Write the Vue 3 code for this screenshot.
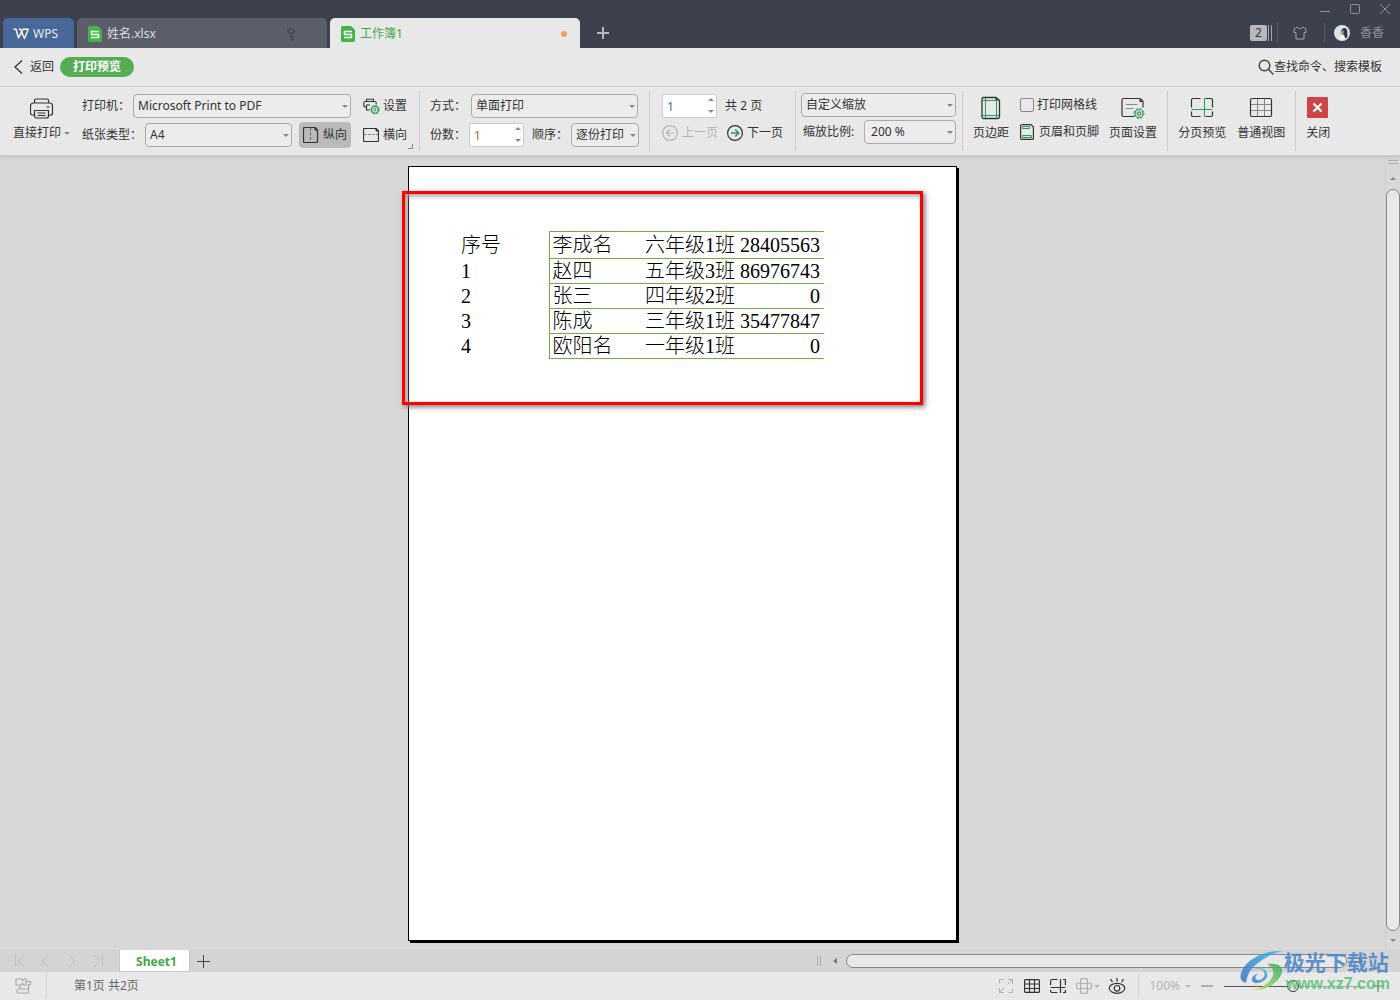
<script setup>
import { ref } from 'vue'

const rows = [
  ['序号', '李成名', '六年级1班', '28405563'],
  ['1', '赵四', '五年级3班', '86976743'],
  ['2', '张三', '四年级2班', '0'],
  ['3', '陈成', '三年级1班', '35477847'],
  ['4', '欧阳名', '一年级1班', '0'],
]
const copies = ref('1')
const page = ref('1')
const gridLines = ref(false)
</script>

<template>
  <div class="app">
    <header class="titlebar">
      <nav class="tabs">
        <button class="tab tab-home">
          <svg width="16" height="12" viewBox="0 0 16 12" fill="none" stroke="#fff" stroke-width="1.400"><path d="M.5 1.200H3L5.500 10 10 1.200h5.200L11.500 10.500 7.500 1.200H5.800M5.500 10L9 4" stroke-linejoin="round" /></svg>
          <span>WPS</span>
        </button>
        <button class="tab tab-file">
          <svg width="14" height="16" viewBox="0 0 14 16"><path d="M1.500 0H10l4 4v10.500a1.500 1.500 0 0 1-1.500 1.500h-11A1.500 1.500 0 0 1 0 14.500v-13A1.500 1.500 0 0 1 1.500 0z" fill="#41b549" /><path d="M11 5.500H3.500v3h7v3H3" fill="none" stroke="#fff" stroke-width="1.500" /></svg>
          <span>姓名.xlsx</span>
          <svg class="tab-end pin" width="9" height="13" viewBox="0 0 9 13" fill="none" stroke="#3d414d" stroke-width="1.200"><rect x="1" y="1" width="6" height="4" rx="1.500" /><path d="M4 5v7.500M4 8.500h3M4 11.500h3" /></svg>
        </button>
        <button class="tab tab-file tab-active">
          <svg width="14" height="16" viewBox="0 0 14 16"><path d="M1.500 0H10l4 4v10.500a1.500 1.500 0 0 1-1.500 1.500h-11A1.500 1.500 0 0 1 0 14.500v-13A1.500 1.500 0 0 1 1.500 0z" fill="#41b549" /><path d="M11 5.500H3.500v3h7v3H3" fill="none" stroke="#fff" stroke-width="1.500" /></svg>
          <span>工作簿1</span>
          <i class="tab-end dot"></i>
        </button>
        <button class="tab-add" aria-label="新建">
          <svg width="12" height="12" viewBox="0 0 12 12" stroke="#b7b9bf" stroke-width="2"><path d="M6 0v12M0 6h12" /></svg>
        </button>
      </nav>
      <div class="title-right">
        <div class="window-buttons">
          <button aria-label="最小化"><svg width="10" height="10" viewBox="0 0 10 10" stroke="#8f929b"><path d="M0 7.500h10" /></svg></button>
          <button aria-label="最大化"><svg width="10" height="10" viewBox="0 0 10 10" fill="none" stroke="#8f929b"><rect x=".5" y=".5" width="9" height="9" rx="1" /></svg></button>
          <button aria-label="关闭窗口"><svg width="10" height="10" viewBox="0 0 10 10" stroke="#8f929b"><path d="M0 0l10 10M10 0L0 10" /></svg></button>
        </div>
        <div class="account">
          <span class="count">2</span>
          <span class="count-bars"></span>
          <i class="rule"></i>
          <svg class="shirt" width="14" height="14" viewBox="0 0 14 14" fill="none" stroke="#a0a3ab"><path d="M4.500 1L1 3v3.500h2V13h8V6.500h2V3L9.500 1C9 3.500 5 3.500 4.500 1z" stroke-linejoin="round" /></svg>
          <i class="rule"></i>
          <svg class="avatar" width="16" height="16" viewBox="0 0 16 16"><circle cx="8" cy="8" r="8" fill="#d8e5e9" /><path d="M7 6c1-3 4-4 5.500-2 1.500 2 .5 5 1 8l-2 1.500L10 10 7 8.500z" fill="#3b353d" /><path d="M6.500 7l3-2v4l-2.500 1z" fill="#c99b8c" /><path d="M5 12l4-2.500 1.500 4.500-3.500 1z" fill="#f4f4f4" /></svg>
          <span>香香</span>
        </div>
      </div>
    </header>

    <div class="subbar">
      <button class="back">
        <svg width="9" height="14" viewBox="0 0 9 14" fill="none" stroke="#333" stroke-width="1.300"><path d="M8 .5L1 7l7 6.500" /></svg>
        <span>返回</span>
      </button>
      <span class="mode">打印预览</span>
      <button class="find">
        <svg width="16" height="16" viewBox="0 0 16 16" fill="none" stroke="#444" stroke-width="1.400"><circle cx="6.500" cy="6.500" r="5.300" /><path d="M10.500 10.500l5 5" /></svg>
        <span>查找命令、搜索模板</span>
      </button>
    </div>

    <section class="ribbon">
      <div class="group g-printer">
        <button class="big">
          <svg width="24" height="24" viewBox="0 0 24 24" fill="none" stroke="#333" stroke-width="1.200"><path d="M4 7V4.500A1.500 1.500 0 0 1 5.500 3h11A1.500 1.500 0 0 1 18 4.500V7M3.500 19H2a2 2 0 0 1-2-2V10a3 3 0 0 1 3-3h16a3 3 0 0 1 3 3v7a2 2 0 0 1-2 2h-1.500M4 14.500h14V20a2 2 0 0 1-2 2H6a2 2 0 0 1-2-2zM16 11h3M7 17h8M7 19.500h8" transform="translate(.5)" /></svg>
          <span>直接打印<i class="caret small"></i></span>
        </button>
        <div class="lines">
          <div class="line">
            <label for="printer">打印机：</label>
            <span class="pick w-printer"><select id="printer"><option>Microsoft Print to PDF</option></select><i class="caret"></i></span>
            <button class="tool settings">
              <svg width="17" height="17" viewBox="0 0 17 17" fill="none"><path d="M3.500 3.500V1.200h7v2.300M3.500 9H2a1.200 1.200 0 0 1-1.200-1.200V5A1.500 1.500 0 0 1 2.300 3.500h9.400A1.500 1.500 0 0 1 13.200 5v1.500M7 7H3.500v5H7" stroke="#333" stroke-width="1.100" /><circle cx="12" cy="11.700" r="3.400" stroke="#2e9a5a" stroke-width="1.200" /><circle cx="12" cy="11.700" r="4.300" stroke="#2e9a5a" stroke-dasharray="1.700 1.670" /><circle cx="12" cy="11.700" r="1.200" stroke="#2e9a5a" /></svg>
              <span>设置</span>
            </button>
          </div>
          <div class="line">
            <label for="paper">纸张类型：</label>
            <span class="pick w-paper"><select id="paper"><option>A4</option></select><i class="caret"></i></span>
            <button class="tool portrait">
              <svg width="16" height="16" viewBox="0 0 16 16" fill="none" stroke="#333"><path d="M1.500.5H12l2.500 2.500v11.500a1 1 0 0 1-1 1h-12a1 1 0 0 1-1-1v-13a1 1 0 0 1 1-1z" stroke-width="1.200" /><path d="M7.500 1v14" stroke-dasharray="3 1.500" stroke="#666" /><path d="M12 .5V3h2.500z" fill="#333" /></svg>
              <span>纵向</span>
            </button>
            <button class="tool landscape">
              <svg width="16" height="14" viewBox="0 0 16 14" fill="none" stroke="#333"><path d="M1.500.5H13L15.500 3v9.500a1 1 0 0 1-1 1h-13a1 1 0 0 1-1-1v-11a1 1 0 0 1 1-1z" stroke-width="1.200" /><path d="M1 6.500h14" stroke-dasharray="3 1" stroke="#888" /><path d="M13 .5V3h2.500z" fill="#333" /></svg>
              <span>横向</span>
            </button>
          </div>
        </div>
        <i class="corner"></i>
      </div>

      <div class="group g-copies">
        <div class="lines">
          <div class="line">
            <label for="duplex">方式：</label>
            <span class="pick w-duplex"><select id="duplex"><option>单面打印</option></select><i class="caret"></i></span>
          </div>
          <div class="line">
            <label for="copies">份数：</label>
            <span class="spin"><input id="copies" v-model="copies" type="text" class="orange"><i class="caret up"></i><i class="caret"></i></span>
            <label for="order" class="order">顺序：</label>
            <span class="pick w-order"><select id="order"><option>逐份打印</option></select><i class="caret"></i></span>
          </div>
        </div>
      </div>

      <div class="group g-pages">
        <div class="lines">
          <div class="line">
            <span class="spin"><input id="page" v-model="page" type="text" aria-label="页码"><i class="caret up"></i><i class="caret"></i></span>
            <label for="page" class="total">共 2 页</label>
          </div>
          <div class="line">
            <button class="tool prev" disabled>
              <svg width="16" height="16" viewBox="0 0 16 16" fill="none" stroke="#b4b4b4" stroke-width="1.200"><circle cx="8" cy="8" r="7.400" /><path d="M12 8H4.500M7.800 4.500L4.300 8l3.500 3.500" /></svg>
              <span>上一页</span>
            </button>
            <button class="tool next">
              <svg width="16" height="16" viewBox="0 0 16 16" fill="none" stroke="#333" stroke-width="1.200"><circle cx="8" cy="8" r="7.400" /><path d="M4 8h7.500M8.200 4.500l3.500 3.500-3.500 3.500" stroke="#2e9a5a" stroke-width="1.500" /></svg>
              <span>下一页</span>
            </button>
          </div>
        </div>
      </div>

      <div class="group g-zoom">
        <div class="lines">
          <div class="line">
            <span class="pick w-fit"><select aria-label="缩放方式"><option>自定义缩放</option></select><i class="caret"></i></span>
          </div>
          <div class="line">
            <label for="scale">缩放比例:</label>
            <span class="pick w-scale"><select id="scale"><option>200 %</option></select><i class="caret"></i></span>
          </div>
        </div>
      </div>

      <div class="group g-layout">
        <button class="big">
          <svg width="24" height="24" viewBox="0 0 24 24" fill="none"><path d="M4.500 1.500H17l3.500 3V21a1.500 1.500 0 0 1-1.500 1.500H4.500A1.500 1.500 0 0 1 3 21V3a1.500 1.500 0 0 1 1.500-1.500z" stroke="#333" stroke-width="1.300" /><path d="M16.500 1.500v3h4z" fill="#333" /><path d="M6.500 2v20M17.500 4.500V22M3.500 4.500h14M3.500 19.500H20" stroke="#22a455" /></svg>
          <span>页边距</span>
        </button>
        <div class="lines options">
          <label class="line check"><input v-model="gridLines" type="checkbox"><span>打印网格线</span></label>
          <button class="line tool hf">
            <svg width="14" height="16" viewBox="0 0 14 16" fill="none"><path d="M1.500.6H11l2.400 2.400v11.400a1 1 0 0 1-1 1H1.600a1 1 0 0 1-1-1V1.600a1 1 0 0 1 1-1z" stroke="#333" stroke-width="1.200" /><path d="M2.500 2.500h7v2h-7zM2.500 11.500h9v2h-9z" stroke="#2e9a5a" /></svg>
            <span>页眉和页脚</span>
          </button>
        </div>
        <button class="big">
          <svg width="24" height="24" viewBox="0 0 24 24" fill="none"><path d="M13 20.500H2.500A1.500 1.500 0 0 1 1 19V4a1.500 1.500 0 0 1 1.500-1.500H19L22 5v6.500" stroke="#333" stroke-width="1.200" /><path d="M18.500 2.500V6H22z" fill="#333" /><path d="M5 8.500h11.500M5 12.500h7.500" stroke="#888" /><circle cx="18" cy="17.500" r="4" stroke="#2e9a5a" stroke-width="1.200" /><circle cx="18" cy="17.500" r="5" stroke="#2e9a5a" stroke-dasharray="2 1.927" /><circle cx="18" cy="17.500" r="1.700" stroke="#2e9a5a" stroke-width="1.200" /></svg>
          <span>页面设置</span>
        </button>
      </div>

      <div class="group g-views">
        <button class="big">
          <svg width="24" height="24" viewBox="0 0 24 24" fill="none"><path d="M10.500 2.500H3A1.500 1.500 0 0 0 1.500 4v7.500M15.500 2.500H21A1.500 1.500 0 0 1 22.500 4v7.500M1.500 15.500V19A1.500 1.500 0 0 0 3 20.500h7.500M22.500 15.500V19a1.500 1.500 0 0 1-1.500 1.500h-5.500M1.500 11.500h9M15.500 11.500h7" stroke="none" /><path d="M10.500 2.500H3A1.500 1.500 0 0 0 1.500 4v7.500M15.500 2.500H21A1.500 1.500 0 0 1 22.500 4v7.500M1.500 15.500V19A1.500 1.500 0 0 0 3 20.500h7.500M22.500 15.500V19a1.500 1.500 0 0 1-1.500 1.500h-5.500" stroke="#333" stroke-width="1.200" /><path d="M14.500 2v19M1.500 13.500h21" stroke="#22a455" /></svg>
          <span>分页预览</span>
        </button>
        <button class="big">
          <svg width="24" height="24" viewBox="0 0 24 24" fill="none"><path d="M8.500 3v17M15.500 3v17M1.500 8.500h21M1.500 14.500h21" stroke="#888" /><rect x="1.500" y="2.500" width="21" height="18" rx="1.500" stroke="#333" stroke-width="1.200" /></svg>
          <span>普通视图</span>
        </button>
      </div>

      <div class="group g-close">
        <button class="big">
          <svg width="24" height="24" viewBox="0 0 24 24"><rect x="1" y="1" width="21" height="21" rx="1" fill="#cd4646" /><path d="M7.500 7.500l8 8M15.500 7.500l-8 8" stroke="#fff" stroke-width="2.200" /></svg>
          <span>关闭</span>
        </button>
      </div>
    </section>

    <main class="workspace">
      <div class="canvas">
        <article class="paper">
          <table>
            <tbody>
              <tr v-for="row in rows" :key="row[1]">
                <td v-for="(cell, i) in row" :key="i">{{ cell }}</td>
              </tr>
            </tbody>
          </table>
          <div class="highlight"></div>
        </article>
      </div>
      <div class="vscroll">
        <i class="split"></i>
        <i class="caret up"></i>
        <div class="vthumb"></div>
        <i class="caret"></i>
      </div>
    </main>

    <div class="sheetbar">
      <div class="sheet-nav">
        <svg width="10" height="12" viewBox="0 0 10 12"><path d="M.5 0v12M9 0L3 6l6 6" /></svg>
        <svg width="10" height="12" viewBox="0 0 10 12"><path d="M7 0L1 6l6 6" /></svg>
        <svg width="10" height="12" viewBox="0 0 10 12"><path d="M2 0l6 6-6 6" /></svg>
        <svg width="10" height="12" viewBox="0 0 10 12"><path d="M9.500 0v12M1 0l6 6-6 6" /></svg>
      </div>
      <button class="sheet">Sheet1</button>
      <button class="sheet-add" aria-label="新建工作表"><svg width="13" height="13" viewBox="0 0 13 13" stroke="#444"><path d="M6.500 0v13M0 6.500h13" /></svg></button>
      <div class="hscroll">
        <i class="split-v"></i>
        <i class="caret left"></i>
        <div class="hthumb"></div>
        <i class="caret right"></i>
      </div>
    </div>

    <footer class="status">
      <svg class="macro" width="17" height="16" viewBox="0 0 17 16" fill="none" stroke="#aaa" stroke-width="1.200"><path d="M6.500 7H1V1h5.500l1 1.500L9 1h2v6H9L7.500 5.500zM11 3.500h4.500v3h-2V11M5 7v3.500M3 11h10.500v4H3q-1 0-1-2t1-2z" /></svg>
      <i class="bar"></i>
      <span class="pages">第1页 共2页</span>
      <div class="view-tools">
        <svg width="16" height="16" viewBox="0 0 16 16" fill="none" stroke="#b0b0b0"><path d="M1.500 5.500v-4h4M14.500 10.500v4h-4M10 1.500h4.500V6M14.500 1.500L9.500 6.500M6 14.500H1.500V10M1.500 14.500l5-5" /></svg>
        <svg width="16" height="16" viewBox="0 0 16 16" fill="none" stroke="#333" stroke-width="1.200"><rect x=".6" y="1.600" width="14.800" height="12.800" rx="1" /><path d="M5.500 2v12.500M10.500 2v12.500M1 6h14.500M1 10.500h14.500" /></svg>
        <svg width="16" height="16" viewBox="0 0 16 16" fill="none" stroke="#333" stroke-width="1.200"><path d="M7.500 1.500H2Q.6 1.500.6 3v4M.6 12v1Q.6 14.500 2 14.500h5.500M10.500 1v14M.6 9.500h14.800M13 1.500h2.400V7M15.400 12v2.500H13" /></svg>
        <span class="cross"><svg width="16" height="16" viewBox="0 0 16 16" fill="none" stroke="#b0b0b0" stroke-width="1.200"><rect x="4.600" y=".6" width="6.800" height="14.800" rx="1" /><path d="M4.500 5H2Q.6 5 .6 6.500v3Q.6 11 2 11h2.500M11.500 5H14q1.400 0 1.400 1.500v3Q15.400 11 14 11h-2.500M4.500 5.500h7M4.500 10.500h7" /></svg><i class="caret pale"></i></span>
        <svg width="18" height="16" viewBox="0 0 18 16" fill="none" stroke="#333" stroke-width="1.200"><ellipse cx="9" cy="10.300" rx="7.800" ry="5" /><circle cx="9" cy="10.300" r="2.800" /><path d="M9 0v3.500M2.500 1.200l2 3M15.500 1.200l-2 3" /></svg>
      </div>
      <i class="bar"></i>
      <span class="percent">100%<i class="caret pale"></i></span>
      <i class="minus"></i>
      <input class="zoom" type="range" min="0" max="100" value="50" aria-label="缩放">
      <svg class="plus" width="12" height="12" viewBox="0 0 12 12" stroke="#aaa" stroke-width="2"><path d="M6 0v12M0 6h12" /></svg>
    </footer>

    <div class="brand">
      <svg width="44" height="42" viewBox="0 0 44 42">
        <defs>
          <linearGradient id="blue" x1="0" y1="1" x2="1" y2="0"><stop offset="0" stop-color="#3d6fc4" /><stop offset="1" stop-color="#35bdea" /></linearGradient>
          <linearGradient id="green" x1="0" y1="1" x2="1" y2="0"><stop offset="0" stop-color="#e3df3b" /><stop offset=".45" stop-color="#7cc96c" /><stop offset="1" stop-color="#31aa61" /></linearGradient>
        </defs>
        <path d="M43 1C29 0 12 6 4 17c-5 8-5 14 2 16 1-9 5-15 12-20C26 7 33 3 43 1z" fill="url(#blue)" />
        <path d="M27 14c9-1 16 1 15 8-2 9-14 19-30 18 9-1 19-8 21-15 1-5-2-9-6-11z" fill="url(#green)" />
        <path d="M6 33c-2-7 6-15 14-14 6 1 6 9 0 11-5 1-6-4-2-6-6 0-9 8-2 9 9 0 14-7 10-12-5-6-20-2-20 12z" fill="url(#blue)" />
      </svg>
      <div class="brand-text"><strong>极光下载站</strong><b>www.xz7.com</b></div>
    </div>
  </div>
</template>

<style>
body {
  margin: 0;
}
</style>

<style scoped>
* {
  box-sizing: border-box;
}
.app {
  position: relative;
  display: flex;
  flex-direction: column;
  min-height: 100vh;
  overflow: hidden;
  background: #d8d8d8;
  color: #333;
  font: 12px/16px "Noto Sans", "Noto Sans CJK SC", sans-serif;
  white-space: nowrap;
}
button {
  display: flex;
  align-items: center;
  margin: 0;
  padding: 0;
  border: 0;
  background: none;
  color: inherit;
  font: inherit;
  white-space: nowrap;
}
svg {
  flex: none;
  display: block;
}
.caret {
  flex: none;
  width: 0;
  height: 0;
  border: 3px solid transparent;
  border-top-color: #888;
  border-bottom-width: 0;
}
.caret.up {
  border-width: 0 3px 3px;
  border-color: transparent transparent #888;
}
.caret.left {
  border-width: 3px 4px 3px 0;
  border-color: transparent #777 transparent transparent;
}
.caret.right {
  border-width: 3px 0 3px 4px;
  border-color: transparent transparent transparent #777;
}
.caret.pale {
  border-top-color: #b8b8b8;
}

.titlebar {
  display: flex;
  justify-content: space-between;
  height: 48px;
  background: #3d414d;
}
.tabs {
  display: flex;
  align-items: flex-end;
  padding-left: 3px;
}
.tab {
  height: 30px;
  padding-top: 2px;
  border-radius: 5px 5px 0 0;
}
.tab-home {
  gap: 4px;
  width: 71px;
  margin-right: 3px;
  padding-left: 10px;
  background: #486899;
  color: #e6ebf3;
}
.tab-file {
  gap: 5px;
  width: 250px;
  margin-right: 3px;
  padding: 2px 11px 0;
  background: #5b5d69;
  color: #dcdde0;
}
.tab-active {
  background: #e8e8e8;
  color: #41a948;
}
.tab-end {
  margin-left: auto;
}
.pin {
  margin-right: 20px;
}
.dot {
  width: 6px;
  height: 6px;
  margin-right: 2px;
  border-radius: 50%;
  background: #e8a05c;
}
.tab-add {
  height: 30px;
  padding-left: 14px;
}
.title-right {
  display: flex;
  flex-direction: column;
  justify-content: space-between;
}
.window-buttons {
  display: flex;
  justify-content: flex-end;
  gap: 20px;
  height: 18px;
  padding-right: 10px;
}
.account {
  display: flex;
  align-items: center;
  height: 30px;
  padding-right: 16px;
  color: #8c8f99;
}
.count {
  width: 17px;
  border-radius: 2px;
  background: #b7b8bc;
  color: #333;
  text-align: center;
}
.count-bars {
  width: 4px;
  height: 16px;
  margin: 0 5px 0 1px;
  border: 1px solid #a5a7ad;
  border-width: 0 1px;
}
.rule {
  width: 1px;
  height: 20px;
  background: #555862;
}
.shirt {
  margin: 0 17px 0 15px;
}
.avatar {
  margin: 0 10px 0 9px;
}

.subbar {
  display: flex;
  align-items: center;
  height: 39px;
  padding: 0 18px 0 14px;
  border-bottom: 1px solid #d5d5d5;
  background: #e8e8e8;
}
.back {
  gap: 7px;
  margin-right: 6px;
}
.mode {
  padding: 2px 13px;
  border-radius: 10px;
  background: #54ad54;
  color: #fff;
  font-weight: 700;
}
.find {
  margin-left: auto;
}

.ribbon {
  display: flex;
  height: 69px;
  padding: 4px 0;
  border-bottom: 1px solid #ccc;
  background: #e8e8e8;
  box-shadow: 0 1px 3px #bbb;
  z-index: 1;
}
.group {
  display: flex;
  flex: none;
  align-items: flex-start;
  border-right: 1px solid #ccc;
}
.big {
  flex-direction: column;
  gap: 5px;
  padding-top: 5px;
}
.big span {
  display: flex;
  align-items: center;
}
.small {
  margin-left: 3px;
}
.lines {
  display: flex;
  flex-direction: column;
  gap: 3px;
  padding-top: 2px;
}
.line {
  display: flex;
  align-items: center;
  height: 26px;
}
.g-printer {
  position: relative;
  padding: 0 12px 0 13px;
}
.g-printer .lines {
  margin-left: 12px;
}
.g-copies {
  padding: 0 10px;
}
.g-pages {
  padding: 0 12px;
}
.g-pages .lines,
.g-zoom .lines,
.g-layout .lines {
  gap: 1px;
}
.g-zoom {
  padding: 0 6px 0 5px;
}
.g-zoom .lines {
  padding-top: 1px;
}
.g-layout .lines {
  padding-top: 1px;
}
.g-layout,
.g-views,
.g-close {
  padding: 0 10px;
}
.g-views {
  gap: 11px;
}
.g-close {
  border-right: 0;
}
.pick {
  display: inline-flex;
  position: relative;
  align-items: center;
}
.pick .caret,
.spin .caret {
  position: absolute;
  right: 3px;
}
.spin .caret {
  bottom: 5px;
}
.spin .caret.up {
  top: 4px;
  bottom: auto;
}
select,
.spin input {
  width: 100%;
  height: 24px;
  margin: 0;
  padding: 0 4px;
  border: 1px solid #aaa;
  border-radius: 4px;
  outline: 0;
  background: #ececec;
  color: #333;
  font: inherit;
  appearance: none;
}
.spin {
  position: relative;
  width: 55px;
}
.spin input {
  display: block;
  border-color: #ccc;
  border-radius: 2px;
  background: #fff;
  color: #446a99;
}
.spin .orange {
  color: #b5662c;
}
.w-printer {
  width: 218px;
}
.w-paper {
  width: 147px;
}
.w-duplex {
  width: 167px;
}
.w-order {
  width: 68px;
}
.w-fit {
  width: 155px;
}
.w-scale {
  width: 92px;
}
.w-scale select {
  padding-left: 6px;
}
label[for="printer"] {
  width: 51px;
}
label[for="paper"] {
  width: 63px;
}
label[for="duplex"] {
  width: 41px;
}
label[for="copies"] {
  width: 39px;
}
label.order {
  width: 39px;
  margin-left: 8px;
}
label[for="scale"] {
  width: 63px;
  padding-left: 2px;
}
.total {
  margin-left: 8px;
}
.tool {
  gap: 4px;
}
.settings {
  gap: 3px;
  margin-left: 12px;
}
.portrait {
  height: 26px;
  margin: 0 12px 0 7px;
  padding: 0 4px;
  border-radius: 4px;
  background: #bababa;
}
.corner {
  position: absolute;
  right: 6px;
  bottom: 2px;
  width: 5px;
  height: 5px;
  border: 1px solid #888;
  border-width: 0 1px 1px 0;
}
.prev {
  margin-right: 9px;
  color: #b4b4b4;
}
.options {
  margin: 0 10px 0 11px;
}
.check {
  gap: 3px;
}
.check input {
  width: 14px;
  height: 14px;
  margin: 0;
  border: 1px solid #888;
  border-radius: 2px;
  appearance: none;
}
.hf {
  gap: 5px;
}

.workspace {
  display: flex;
  flex: 1;
}
.canvas {
  display: flex;
  flex: 1;
  align-items: flex-start;
  justify-content: center;
  padding: 10px 20px 9px 0;
}
.paper {
  position: relative;
  width: 549px;
  min-height: 775px;
  padding: 64px 0 0 49px;
  border: 1px solid #000;
  background: #fff;
  box-shadow: 2px 2px 0 #000;
}
table {
  border-collapse: collapse;
  table-layout: fixed;
  width: 366px;
  color: #000;
  font: 300 20px/24px "Liberation Serif", "Noto Sans CJK SC", serif;
}
td {
  height: 25px;
  padding: 0 3px;
  border: solid #70ad47;
  border-width: 1px 0;
}
tr:first-child td {
  height: 27px;
}
td:nth-child(1) {
  width: 91px;
  border: 0;
}
td:nth-child(2) {
  width: 93px;
  border-left-width: 1px;
}
td:nth-child(3) {
  width: 92px;
}
td:nth-child(4) {
  padding-right: 4px;
  text-align: right;
}
.highlight {
  position: absolute;
  top: 24px;
  left: -7px;
  width: 521px;
  height: 214px;
  border: 3px solid #f00;
  box-shadow: 2px 2px 5px #777, inset 2px 2px 5px #999;
}
.vscroll {
  display: flex;
  flex-direction: column;
  align-items: center;
  width: 15px;
  padding: 4px 0 8px;
  border-left: 1px solid #d0d0d0;
}
.split {
  width: 10px;
  height: 4px;
  margin-bottom: 13px;
  border: 1px solid #aaa;
  border-width: 1px 0;
}
.vthumb {
  flex: 1;
  width: 14px;
  margin: 9px 0 8px;
  border: 1px solid #888;
  border-radius: 7px;
  background: #e8e8e8;
}

.sheetbar {
  display: flex;
  align-items: center;
  height: 22px;
  padding-bottom: 1px;
  border-top: 1px solid #d0d0d0;
  background: #d4d4d4;
}
.sheet-nav {
  display: flex;
  gap: 16px;
  padding: 0 16px 0 15px;
}
.sheet-nav svg {
  fill: none;
  stroke: #bfbfbf;
}
.sheet {
  justify-content: center;
  width: 71px;
  height: 22px;
  padding: 2px 0 0 4px;
  border: 1px solid #c8c8c8;
  border-top: 0;
  background: #fff;
  color: #41a948;
  font-weight: 700;
}
.sheet-add {
  margin-left: 7px;
}
.hscroll {
  display: flex;
  flex: none;
  align-items: center;
  width: 42%;
  margin-left: auto;
  padding: 0 37px 0 5px;
}
.split-v {
  width: 4px;
  height: 10px;
  margin-right: 12px;
  border: 1px solid #aaa;
  border-width: 0 1px;
}
.hthumb {
  flex: 1;
  height: 14px;
  margin: 0 12px 0 9px;
  border: 1px solid #888;
  border-radius: 7px;
  background: #e8e8e8;
}

.status {
  display: flex;
  align-items: center;
  height: 28px;
  padding: 0 16px 0 15px;
  background: #e8e8e8;
  color: #666;
}
.bar {
  width: 1px;
  height: 24px;
  background: #d2d2d2;
}
.macro {
  margin-right: 14px;
}
.pages {
  margin-left: 27px;
}
.view-tools {
  display: flex;
  align-items: center;
  gap: 10px;
  margin: 0 12px 0 auto;
}
.cross {
  display: flex;
  align-items: center;
  gap: 2px;
  margin-right: -2px;
}
.percent {
  display: flex;
  align-items: center;
  gap: 5px;
  margin-left: 10px;
  color: #b4b4b4;
}
.minus {
  width: 12px;
  height: 2px;
  margin: 0 11px 0 10px;
  background: #b0b0b0;
}
.zoom {
  width: 138px;
  height: 14px;
  margin: 0 10px 0 0;
  background: linear-gradient(90deg, #555 50%, #aaa 50%) center / 100% 1px no-repeat;
  appearance: none;
}
.zoom::-webkit-slider-thumb {
  width: 12px;
  height: 12px;
  border: 1px solid #333;
  border-radius: 50%;
  background: #e8e8e8;
  appearance: none;
}
.brand {
  display: flex;
  position: absolute;
  right: 10px;
  bottom: 6px;
  z-index: 2;
  opacity: 0.85;
  pointer-events: none;
}
.brand-text {
  display: flex;
  flex-direction: column;
}
.brand strong {
  color: #4684c8;
  font-size: 21px;
  line-height: 24px;
}
.brand b {
  padding-left: 2px;
  color: #58c276;
  font: 700 16px/20px "Liberation Sans", sans-serif;
}
</style>
